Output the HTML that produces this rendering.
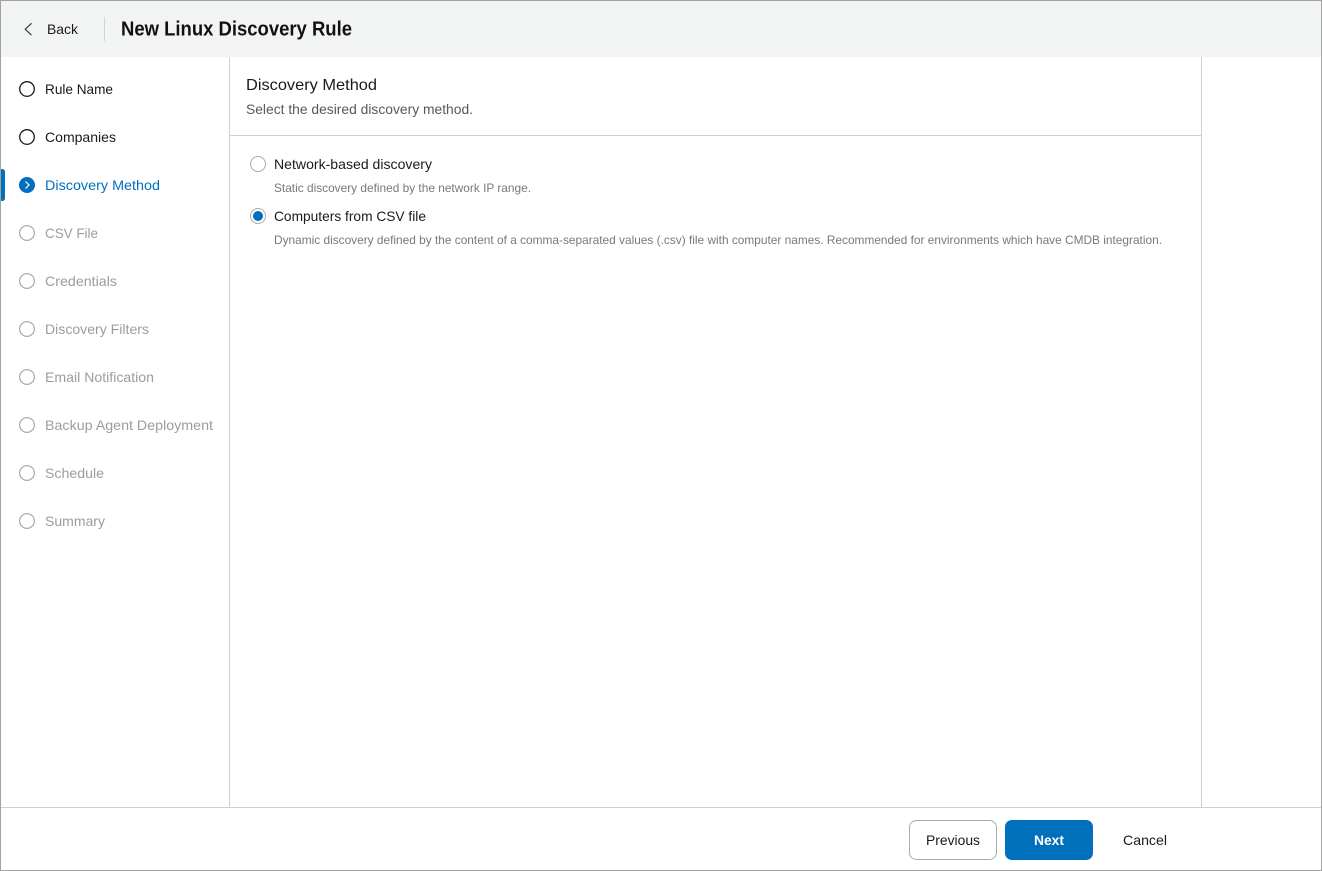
<!DOCTYPE html>
<html lang="en">
<head>
<meta charset="utf-8">
<title>New Linux Discovery Rule</title>
<style>
html,body{margin:0;padding:0;background:#fff}
svg{display:block}
text{font-family:"Liberation Sans",sans-serif;font-size:14px;fill:#1a1a1a}
.off{fill:#9a9d9f}
.sub{fill:#76797c;font-size:12px}
</style>
</head>
<body>
<svg width="1322" height="871" viewBox="0 0 1322 871" xmlns="http://www.w3.org/2000/svg">
<rect width="1322" height="871" fill="#fff"/>
<rect x="0" y="0" width="1322" height="57" fill="#f2f4f3"/>
<rect x="104" y="17" width="1" height="24" fill="#d2d4d4"/>
<path d="M31.500 23.300L25.200 29.200L31.500 35.100" fill="none" stroke="#333" stroke-width="1.100"/>
<text x="47" y="34" textLength="31" lengthAdjust="spacingAndGlyphs">Back</text>
<text x="121" y="35.5" textLength="231" lengthAdjust="spacingAndGlyphs" style="font-size:20px;font-weight:700;fill:#111">New Linux Discovery Rule</text>

<rect x="229" y="57" width="1" height="750" fill="#d0d0d0"/>
<rect x="1201" y="57" width="1" height="750" fill="#d0d0d0"/>
<rect x="230" y="135" width="971" height="1" fill="#d0d0d0"/>
<rect x="1" y="807" width="1320" height="1" fill="#d0d0d0"/>

<circle cx="27" cy="89" r="7.3" fill="none" stroke="#1a1a1a" stroke-width="1.3"/>
<text x="45" y="94" textLength="68" lengthAdjust="spacingAndGlyphs">Rule Name</text>
<circle cx="27" cy="137" r="7.3" fill="none" stroke="#1a1a1a" stroke-width="1.3"/>
<text x="45" y="142" textLength="71" lengthAdjust="spacingAndGlyphs">Companies</text>

<path d="M1 169H2Q5 169 5 172V198Q5 201 2 201H1Z" fill="#0070bc"/>
<circle cx="27" cy="185" r="8" fill="#0070bc"/>
<path d="M25.500 181.500L29 185L25.500 188.500" fill="none" stroke="#fff" stroke-width="1.200"/>
<text x="45" y="190" textLength="115" lengthAdjust="spacingAndGlyphs" style="fill:#0070bc">Discovery Method</text>

<g fill="none" stroke="#a8aaac" stroke-width="1.2">
<circle cx="27" cy="233" r="7.4"/>
<circle cx="27" cy="281" r="7.4"/>
<circle cx="27" cy="329" r="7.4"/>
<circle cx="27" cy="377" r="7.4"/>
<circle cx="27" cy="425" r="7.4"/>
<circle cx="27" cy="473" r="7.4"/>
<circle cx="27" cy="521" r="7.4"/>
</g>
<text class="off" x="45" y="238" textLength="53" lengthAdjust="spacingAndGlyphs">CSV File</text>
<text class="off" x="45" y="286" textLength="72" lengthAdjust="spacingAndGlyphs">Credentials</text>
<text class="off" x="45" y="334" textLength="104" lengthAdjust="spacingAndGlyphs">Discovery Filters</text>
<text class="off" x="45" y="382" textLength="109" lengthAdjust="spacingAndGlyphs">Email Notification</text>
<text class="off" x="45" y="430" textLength="168" lengthAdjust="spacingAndGlyphs">Backup Agent Deployment</text>
<text class="off" x="45" y="478" textLength="59" lengthAdjust="spacingAndGlyphs">Schedule</text>
<text class="off" x="45" y="526" textLength="60" lengthAdjust="spacingAndGlyphs">Summary</text>

<text x="246" y="90" textLength="131" lengthAdjust="spacingAndGlyphs" style="font-size:16px">Discovery Method</text>
<text x="246" y="114" textLength="227" lengthAdjust="spacingAndGlyphs" style="fill:#55595c">Select the desired discovery method.</text>

<circle cx="258" cy="164" r="7.500" fill="#fff" stroke="#a8aaac" stroke-width="1"/>
<text x="274" y="169" textLength="158" lengthAdjust="spacingAndGlyphs">Network-based discovery</text>
<text class="sub" x="274" y="192" textLength="257" lengthAdjust="spacingAndGlyphs">Static discovery defined by the network IP range.</text>

<circle cx="258" cy="216" r="7.500" fill="#fff" stroke="#a8aaac" stroke-width="1"/>
<circle cx="258" cy="216" r="5" fill="#0070bc"/>
<text x="274" y="221" textLength="152" lengthAdjust="spacingAndGlyphs">Computers from CSV file</text>
<text class="sub" x="274" y="244" textLength="888" lengthAdjust="spacingAndGlyphs">Dynamic discovery defined by the content of a comma-separated values (.csv) file with computer names. Recommended for environments which have CMDB integration.</text>

<rect x="909.500" y="820.500" width="87" height="39" rx="7" fill="#fff" stroke="#a8aaac"/>
<text x="926" y="845" textLength="54" lengthAdjust="spacingAndGlyphs">Previous</text>
<rect x="1005" y="820" width="88" height="40" rx="7" fill="#0070bc"/>
<text x="1034" y="845" textLength="30" lengthAdjust="spacingAndGlyphs" style="fill:#fff;font-weight:700">Next</text>
<text x="1123" y="845" textLength="44" lengthAdjust="spacingAndGlyphs">Cancel</text>

<rect x="0.500" y="0.500" width="1321" height="870" fill="none" stroke="#a3a3a3"/>
</svg>
</body>
</html>
